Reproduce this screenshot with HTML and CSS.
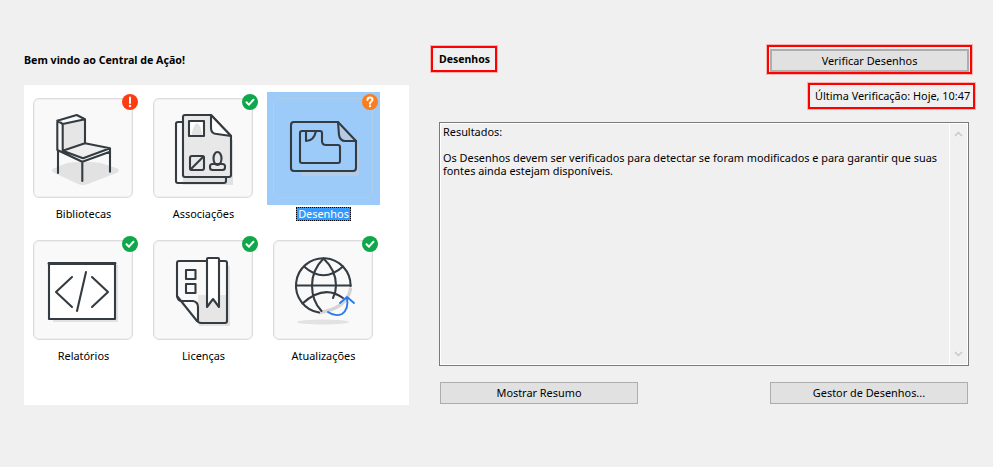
FILE: index.html
```html
<!DOCTYPE html>
<html lang="pt">
<head>
<meta charset="utf-8">
<title>Central de Ação</title>
<link rel="stylesheet" href="styles.css">
</head>
<body>
<main class="page">
  <section class="left">
    <h1 class="welcome">Bem vindo ao Central de Ação!</h1>
    <div class="panel">
      <div class="item">
        <div class="cell"><div class="tile">
          <svg viewBox="0 0 100 100" class="icon">
            <path class="shade" d="M20.500 70.500 L34 65 Q50 62 68 65 L84.500 70.500 Q87 72.500 84.500 74.500 L55 86 Q50 88 45 86 L20.500 74.500 Q17.500 72.500 20.500 70.500Z"/>
            <path class="fill" d="M29.700 26 L52 21.300 V45.300 L29.700 52.700Z"/>
            <path class="light" d="M29.700 52.700 L52 45.300 L77 50.300 L50 60.300Z"/>
            <path class="ink" d="M25 75 V52 M24.300 52 V22.700 L43.700 17 L52 21.300 L29.700 26 V52.700 M24.300 22.700 L29.700 26 M52 21.300 V45.300 M29.700 52.700 L52 45.300 L77 50.300 L50 60.300 L29.700 52.700 M24.300 52 L49.300 63.700 L77 53.700 V50.300 M49.300 63.700 V83 M77 53.700 V73.700"/>
          </svg>
          <span class="badge err"><svg viewBox="0 0 16 16"><path class="mark-w" d="M8 3.500 V9"/><circle class="dot-w" cx="8" cy="12" r="1.200"/></svg></span>
        </div></div>
        <div class="label">Bibliotecas</div>
      </div>
      <div class="item">
        <div class="cell"><div class="tile">
          <svg viewBox="0 0 100 100" class="icon">
            <path class="shade" d="M30 87 H80 V42 L73 40 V80 H30Z"/>
            <path class="ink" d="M30 24 H25 Q23 24 23 26 V83 Q23 85 25 85 H71 Q73 85 73 83 V79"/>
            <path class="fill ink" d="M32 17 H58 L78 38 V77 Q78 79 76 79 H32 Q30 79 30 77 V19 Q30 17 32 17Z"/>
            <path class="paper ink" d="M58 17 V30 Q58 36 64 36 L78 38Z"/>
            <rect class="paper ink" x="36" y="23" width="15" height="15"/>
            <path class="shade" d="M38.500 37 Q40 27 44 25 Q48 27 49 37Z"/>
            <rect class="ink" x="37" y="58" width="14" height="14" rx="2"/>
            <path class="ink" d="M37.500 71.500 L50.500 58.500"/>
            <ellipse class="ink" cx="64.500" cy="60.500" rx="4" ry="6.500"/>
            <rect class="ink" x="57" y="66" width="15" height="6" rx="2.500"/>
          </svg>
          <span class="badge ok"><svg viewBox="0 0 16 16"><path class="mark-w" d="M4.500 8.200 L7 10.700 L11.500 5.700"/></svg></span>
        </div></div>
        <div class="label">Associações</div>
      </div>
      <div class="item">
        <div class="cell selected"><div class="tile">
          <svg viewBox="0 0 100 100" class="icon">
            <path class="shade-sel" d="M86 46 V76 Q86 78 84 78 H28 V74 H83 V44Z"/>
            <path class="shade-sel" d="M65 24 L83 43 H72 Q67 43 66 37Z"/>
            <path class="ink" d="M21 24 H65 L83 43 V70 Q83 73 80 73 H21 Q18 73 18 70 V27 Q18 24 21 24Z"/>
            <path class="ink" d="M65 24 L66 37 Q67 43 72 43 H83"/>
            <path class="ink" d="M29 33 H47 Q49 33 49 35 V43 Q49 47 53 47 H65 Q67 47 67 49 V63 Q67 65 65 65 H29 Q27 65 27 63 V35 Q27 33 29 33Z"/>
            <path class="ink" d="M33 33 V43 Q41 43 43 33"/>
          </svg>
          <span class="badge warn"><svg viewBox="0 0 16 16"><path class="mark-w" d="M5.500 6 Q5.500 3.600 8 3.600 Q10.500 3.600 10.500 5.800 Q10.500 7 9 7.800 Q8 8.400 8 9.700"/><circle class="dot-w" cx="8" cy="12.200" r="1.100"/></svg></span>
        </div></div>
        <div class="label"><span class="label-sel">Desenhos</span></div>
      </div>
      <div class="item">
        <div class="cell"><div class="tile">
          <svg viewBox="0 0 100 100" class="icon">
            <path class="shade" d="M82 25 H85 V82 H20 V79 H82Z"/>
            <rect class="paper ink" x="16" y="23" width="66" height="56"/>
            <path class="ink-bold" d="M16 23.500 H82"/>
            <path class="ink" d="M39 37 L23 52 L39 67 M59 37 L75 52 L59 67 M53 32 L44 71"/>
          </svg>
          <span class="badge ok"><svg viewBox="0 0 16 16"><path class="mark-w" d="M4.500 8.200 L7 10.700 L11.500 5.700"/></svg></span>
        </div></div>
        <div class="label">Relatórios</div>
      </div>
      <div class="item">
        <div class="cell"><div class="tile">
          <svg viewBox="0 0 100 100" class="icon">
            <path class="shade" d="M77 26 V86 H46 V83 H74 V26Z"/>
            <path class="fill" d="M45 67 V55 H74 V81 Q74 83 72 83 H46Z"/>
            <path class="ink" d="M54 21 H26 Q24 21 24 23 V56 L44 81 Q46 83 48 83 H72 Q74 83 74 81 V23 Q74 21 72 21 H66"/>
            <path class="ink" d="M24 56 Q25 61 29 61 H40 Q45 62 45 67 V81"/>
            <path class="paper ink" d="M54 19 Q54 18 55 18 H65 Q66 18 66 19 V67 L60 59 L54 67Z"/>
            <rect class="ink" x="33" y="30" width="9.500" height="9"/>
            <rect class="ink" x="33" y="44" width="9.500" height="9"/>
          </svg>
          <span class="badge ok"><svg viewBox="0 0 16 16"><path class="mark-w" d="M4.500 8.200 L7 10.700 L11.500 5.700"/></svg></span>
        </div></div>
        <div class="label">Licenças</div>
      </div>
      <div class="item">
        <div class="cell"><div class="tile">
          <svg viewBox="0 0 100 100" class="icon">
            <ellipse class="shade" cx="50" cy="82" rx="26" ry="2.500"/>
            <path class="arc-grey" d="M77.500 49 Q74 68 47 72.500"/>
            <path class="ink" d="M46 72.500 A27.300 27.300 0 1 1 77.600 46"/>
            <path class="ink" d="M23.200 45.500 H77.600 M31 26.500 Q50.500 44 70 26.500 M29.500 63.500 Q51 44 70 58 M50.500 18.500 Q39 30 39 45.500 Q39 61 48.500 71 M50.500 18.500 Q63 30 63 45.500 Q63 52 60 58"/>
            <path class="ink-blue" d="M55 72 Q62 77 69 74 Q76 69 74 58 M67 63 L74 57 L81 63"/>
          </svg>
          <span class="badge ok"><svg viewBox="0 0 16 16"><path class="mark-w" d="M4.500 8.200 L7 10.700 L11.500 5.700"/></svg></span>
        </div></div>
        <div class="label">Atualizações</div>
      </div>
    </div>
  </section>

  <section class="right">
    <header class="head">
      <h2 class="title marked">Desenhos</h2>
      <div class="marked action"><button class="btn btn-check" type="button">Verificar Desenhos</button></div>
    </header>
    <div class="last-row"><span class="marked last">Última Verificação: Hoje, 10:47</span></div>
    <div class="results">
      <div class="results-text">
        <p>Resultados:</p>
        <p>Os Desenhos devem ser verificados para detectar se foram modificados e para garantir que suas fontes ainda estejam disponíveis.</p>
      </div>
      <div class="scroll">
        <svg viewBox="0 0 9 6" class="chev"><path d="M1 5 L4.500 1.500 L8 5"/></svg>
        <svg viewBox="0 0 9 6" class="chev"><path d="M1 1 L4.500 4.500 L8 1"/></svg>
      </div>
    </div>
    <footer class="foot">
      <button class="btn" type="button">Mostrar Resumo</button>
      <button class="btn" type="button">Gestor de Desenhos...</button>
    </footer>
  </section>
</main>
</body>
</html>
```
FILE: styles.css
```css
* { box-sizing: border-box; }
html, body { margin: 0; padding: 0; }
body {
  width: 993px;
  height: 467px;
  overflow: hidden;
  background: #f0f0f0;
  color: #000;
  font-family: "Noto Sans", "Open Sans", sans-serif;
  font-size: 10.900px;
}
.page { display: flex; padding-left: 24px; }

.left { width: 385px; padding-top: 52px; }
.welcome { margin: 0 0 17px; height: 16px; font-size: 10.650px; line-height: 16px; font-weight: 700; }
.panel {
  width: 385px;
  height: 320px;
  background: #fff;
  padding: 7px 0 0 3px;
  display: grid;
  grid-template-columns: repeat(3, 113px);
  grid-auto-rows: 142px;
  column-gap: 7px;
  align-content: start;
}
.item { display: flex; flex-direction: column; align-items: center; }
.cell { width: 113px; height: 113px; padding: 6px 7px 7px 6px; }
.selected { background: #9ccbfa; }
.tile {
  position: relative;
  width: 100px;
  height: 100px;
  background: #f9f9f9;
  border: 1px solid #dcdcdc;
  box-shadow: inset 0 0 0 1px #f0f0f0;
  border-radius: 6px;
}
.selected .tile { background: transparent; border-color: #aecde9; box-shadow: none; }
.icon { position: absolute; left: -1px; top: -1px; width: 100px; height: 100px; display: block; }
.badge {
  position: absolute;
  left: 88px;
  top: -5px;
  width: 16px;
  height: 16px;
  border-radius: 50%;
}
.badge svg { display: block; width: 16px; height: 16px; }
.err { background: #fc3d12; }
.ok { background: #10a64a; }
.warn { background: #fb7d1c; }
.mark-w { fill: none; stroke: #fff; stroke-width: 2; stroke-linecap: round; stroke-linejoin: round; }
.dot-w { fill: #fff; }
.label { height: 18px; margin-top: 2px; line-height: 14px; text-align: center; }
.label-sel {
  display: inline-block;
  height: 14px;
  padding: 0 2px;
  line-height: 13px;
  background: #3399ff;
  color: #fff;
  outline: 1px dotted #000;
  outline-offset: -1px;
}

.ink, .ink-bold, .ink-blue, .arc-grey { fill: none; stroke-linecap: round; stroke-linejoin: round; }
.ink { stroke: #343c42; stroke-width: 2.100; }
.ink-bold { stroke: #343c42; stroke-width: 2.800; }
.ink-blue { stroke: #2979ee; stroke-width: 1.900; }
.arc-grey { stroke: #d4d4d4; stroke-width: 3.500; }
.shade { fill: #e2e2e2; }
.shade-sel { fill: #b3cbe4; }
.fill { fill: #e6e6e6; }
.light { fill: #efefef; }
.paper { fill: #ffffff; }
.fill.ink { fill: #e8e8e8; }
.paper.ink { fill: #ffffff; }

.right { width: 544px; margin-left: 22px; padding-top: 45px; }
.head { display: flex; justify-content: space-between; align-items: flex-start; padding-right: 3px; }
.marked { border: 2px solid #f00; box-shadow: 0 0 0 1px rgba(255, 0, 0, 0.25); }
.title {
  margin: 1px 0 0;
  width: 66px;
  height: 26px;
  padding-left: 6px;
  font-size: 10.500px;
  line-height: 22px;
  font-weight: 700;
}
.action { width: 205px; height: 29px; padding: 2px 1px; }
.btn {
  display: block;
  width: 198px;
  height: 22px;
  padding: 0;
  background: #e1e1e1;
  border: 1px solid #adadad;
  color: #000;
  font: inherit;
  line-height: 20px;
  text-align: center;
}
.btn-check { width: 199px; height: 23px; border-width: 2px; line-height: 19px; }
.last-row { display: flex; justify-content: flex-end; margin-top: 9px; }
.last { display: block; width: 167px; height: 26px; padding-left: 5px; line-height: 22px; white-space: nowrap; }
.results {
  display: flex;
  width: 530px;
  height: 244px;
  margin: 13px 0 0 8px;
  border: 1px solid #7a7a7a;
  box-shadow: inset 0 0 0 1px #fff;
}
.results-text { flex: 1; padding: 2px 12px 0 3px; line-height: 13px; }
.results-text p { margin: 0 0 13px; }
.scroll {
  width: 18px;
  margin: 1px 1px 1px 0;
  border-left: 1px solid #fff;
  display: flex;
  flex-direction: column;
  justify-content: space-between;
  align-items: center;
  padding: 7px 0;
}
.chev { width: 9px; height: 6px; display: block; }
.chev path { fill: none; stroke: #c8c8c8; stroke-width: 1.500; }
.foot { display: flex; justify-content: space-between; width: 528px; margin: 16px 0 0 9px; }
```
